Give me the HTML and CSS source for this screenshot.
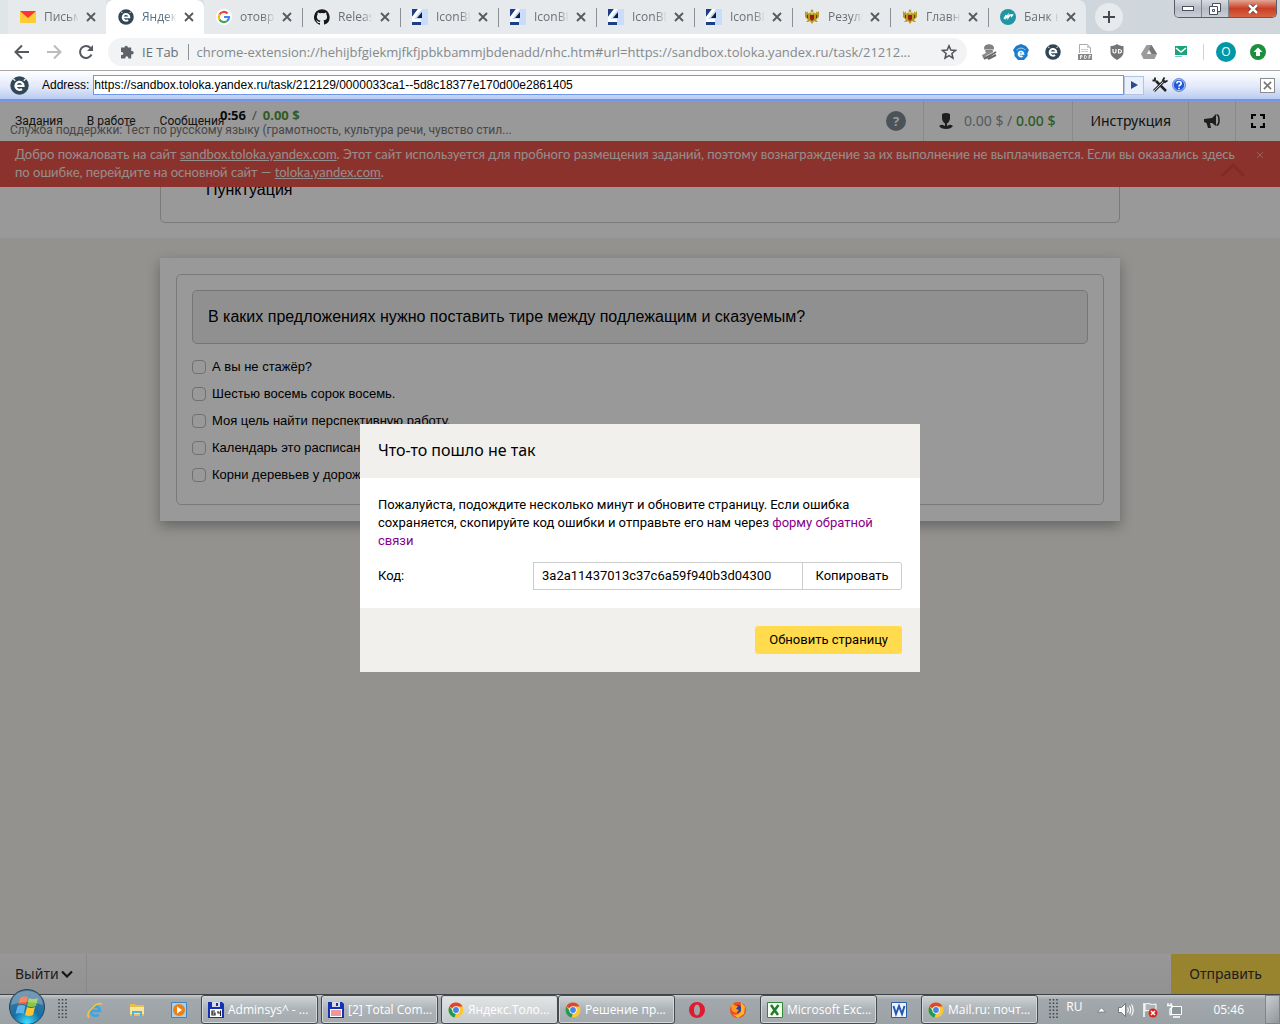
FILE: index.html
```html
<!DOCTYPE html>
<html lang="ru">
<head>
<meta charset="utf-8">
<title>Яндекс.Толока</title>
<link rel="stylesheet" href="styles.css">
</head>
<body>
<svg class="defs" aria-hidden="true">
  <symbol id="i-x" viewBox="0 0 10 10"><path d="M1 1l8 8M9 1l-8 8" stroke="currentColor" stroke-width="1.800" fill="none"/></symbol>
  <symbol id="i-e" viewBox="0 0 20 20"><circle cx="10" cy="10" r="9.700" fill="#2f4757"/><path d="M5.800 10.500h8.400a4.200 4.200 0 1 0-1.600 3.200" stroke="#fff" stroke-width="2.400" fill="none"/><path d="M3.500 3l2 2M16.500 3l-2 2" stroke="#fff" stroke-width="1.200"/></symbol>
  <symbol id="i-bit" viewBox="0 0 16 16"><path fill="#c9dcfb" d="M0 0h16v16H0z"/><path fill="#1d3f86" d="M0 0h6L0 8zM0 13h9v3H0z"/><path fill="#fff" d="M6 0h4L2 10H0V8z"/><path fill="#10203f" d="M10 3v6H5z"/><path fill="#fff" d="M0 10h9v3H0z"/></symbol>
  <symbol id="i-eagle" viewBox="0 0 16 16"><path fill="#b79a1c" d="M8 0l1.500 2L8 4 6.500 2zM1 2l2 2V2l2 3 1-2 2 2 2-2 1 2 2-3v2l2-2v6l-3 3 2 2-2 0-2-1-2 3-2-3-2 1-2 0 2-2-3-3z"/><path fill="#9c1c1c" d="M6 6h4v4l-2 2-2-2z"/><path fill="#4f4208" d="M3 6l1 3M12 6h1v3h-1zM3 6h1v3H3z"/></symbol>
  <symbol id="i-chrome" viewBox="0 0 16 16"><circle cx="8" cy="8" r="7.500" fill="#fbc934"/><path fill="#e04434" d="M8 8L1.300 4.500a7.500 7.500 0 0 1 13.300 0H8z"/><path fill="#229954" d="M1.400 4.500L6 10.500 8 11l-1.500 4.400A7.500 7.500 0 0 1 1.400 4.500z"/><circle cx="8" cy="8" r="3.700" fill="#fff"/><circle cx="8" cy="8" r="2.900" fill="#4684ee"/></symbol>
  <symbol id="i-floppy" viewBox="0 0 16 16"><path fill="#1632b4" d="M0 0h14l2 2v14H0z"/><path fill="#d7dbe4" d="M4 0h8v5H4z"/><path fill="#1632b4" d="M8 1h2v3H8z"/><path fill="#fff" d="M2 7h12v8H2z"/></symbol>
  <symbol id="i-grip" viewBox="0 0 9 21"><path d="M1 0v21M4.500 0v21M8 0v21" stroke="#3d4347" stroke-width="1.500" stroke-dasharray="1.500 2" fill="none"/></symbol>
</svg>

<header class="tabs">
  <nav class="tabs-list" aria-label="Вкладки">
    <a class="tab" href="#"><svg class="icon" viewBox="0 0 16 16"><path fill="#ffcc33" d="M0 2h16v12H0z"/><path fill="#f33" d="M0 2h16L8 9z"/></svg><span class="tab-title">Письма</span><svg class="tab-close"><use href="#i-x"/></svg></a>
    <a class="tab tab-active" href="#"><svg class="icon"><use href="#i-e"/></svg><span class="tab-title">Яндекс</span><svg class="tab-close"><use href="#i-x"/></svg></a>
    <a class="tab" href="#"><svg class="icon" viewBox="0 0 16 16"><circle cx="8" cy="8" r="8" fill="#fff"/><g fill="none" stroke-width="2.200"><path stroke="#ea4335" d="M3.500 5.500a5 5 0 0 1 8-1"/><path stroke="#fbbc05" d="M3.500 5.500a5 5 0 0 0 0 5"/><path stroke="#34a853" d="M3.500 10.500a5 5 0 0 0 7.500 1.500"/><path stroke="#4285f4" d="M8 8h5a5 5 0 0 1-2 4"/></g></svg><span class="tab-title">отовра</span><svg class="tab-close"><use href="#i-x"/></svg></a>
    <a class="tab tab-line" href="#"><svg class="icon" viewBox="0 0 16 16"><path fill="#191717" d="M8 .2a8 8 0 0 0-2.500 15.600c.4 0 .5-.2.500-.4v-1.500c-2.200.5-2.700-1-2.700-1-.4-.9-.9-1.200-.9-1.200-.7-.5.1-.5.100-.5.800.1 1.200.8 1.200.8.700 1.200 1.900.9 2.300.7.100-.5.300-.9.500-1.100-1.800-.2-3.600-.9-3.600-4 0-.9.300-1.600.8-2.100-.1-.2-.4-1 .1-2.100 0 0 .7-.2 2.200.8a7.500 7.500 0 0 1 4 0c1.500-1 2.200-.8 2.200-.8.400 1.100.2 1.900.100 2.100.5.600.8 1.300.8 2.100 0 3.100-1.900 3.700-3.700 3.900.3.300.6.800.6 1.500v2.200c0 .200.100.500.600.400A8 8 0 0 0 8 .2z"/></svg><span class="tab-title">Release</span><svg class="tab-close"><use href="#i-x"/></svg></a>
    <a class="tab tab-line" href="#"><svg class="icon"><use href="#i-bit"/></svg><span class="tab-title">IconBIT</span><svg class="tab-close"><use href="#i-x"/></svg></a>
    <a class="tab tab-line" href="#"><svg class="icon"><use href="#i-bit"/></svg><span class="tab-title">IconBIT</span><svg class="tab-close"><use href="#i-x"/></svg></a>
    <a class="tab tab-line" href="#"><svg class="icon"><use href="#i-bit"/></svg><span class="tab-title">IconBIT</span><svg class="tab-close"><use href="#i-x"/></svg></a>
    <a class="tab tab-line" href="#"><svg class="icon"><use href="#i-bit"/></svg><span class="tab-title">IconBIT</span><svg class="tab-close"><use href="#i-x"/></svg></a>
    <a class="tab tab-line" href="#"><svg class="icon"><use href="#i-eagle"/></svg><span class="tab-title">Резуль</span><svg class="tab-close"><use href="#i-x"/></svg></a>
    <a class="tab tab-line" href="#"><svg class="icon"><use href="#i-eagle"/></svg><span class="tab-title">Главна</span><svg class="tab-close"><use href="#i-x"/></svg></a>
    <a class="tab tab-line" href="#"><svg class="icon" viewBox="0 0 16 16"><circle cx="8" cy="8" r="8" fill="#2196a3"/><path d="M4 10l2-4v3l2-3v3l2-3h2.500l-1.500 2" stroke="#fff" stroke-width="1.300" fill="none"/></svg><span class="tab-title">Банк в</span><svg class="tab-close"><use href="#i-x"/></svg></a>
  </nav>
  <button class="tab-new" aria-label="Новая вкладка"><svg viewBox="0 0 12 12" width="12" height="12"><path d="M6 0v12M0 6h12" stroke="#45494e" stroke-width="2"/></svg></button>
  <div class="win">
    <button class="win-btn" aria-label="Свернуть"><svg viewBox="0 0 12 6" width="12" height="6"><rect x=".5" y=".5" width="11" height="4" fill="#fff" stroke="#4b5061"/></svg></button>
    <button class="win-btn" aria-label="Развернуть"><svg viewBox="0 0 12 12" width="12" height="12"><path d="M3.500.5h8v8h-8z" fill="#fff" stroke="#4b5061"/><path d="M.5 3.500h8v8h-8z" fill="#fff" stroke="#4b5061"/><path d="M3.500 6.500h2v2h-2z" fill="none" stroke="#4b5061"/></svg></button>
    <button class="win-btn win-close" aria-label="Закрыть"><svg viewBox="0 0 12 10" width="12" height="10"><path d="M2 1l8 8M10 1L2 9" stroke="#5b3030" stroke-width="4"/><path d="M2 1l8 8M10 1L2 9" stroke="#fff" stroke-width="2.500"/></svg></button>
  </div>
</header>

<div class="toolbar">
  <button class="tool" aria-label="Назад"><svg viewBox="0 0 16 16" width="16" height="16"><path d="M15 8H2M8 1.500L1.500 8 8 14.500" stroke="#55585d" stroke-width="2" fill="none"/></svg></button>
  <button class="tool" aria-label="Вперёд"><svg viewBox="0 0 16 16" width="16" height="16"><path d="M1 8h13M8 1.500L14.500 8 8 14.500" stroke="#b9bbbe" stroke-width="2" fill="none"/></svg></button>
  <button class="tool" aria-label="Обновить"><svg viewBox="0 0 16 16" width="16" height="16"><path d="M13.500 10.500A6 6 0 1 1 12.500 4" stroke="#55585d" stroke-width="2" fill="none"/><path d="M15 1v6H9z" fill="#55585d"/></svg></button>
  <div class="omnibox">
    <svg viewBox="0 0 14 14" width="14" height="14"><path fill="#5f6368" d="M4.500 2.500a1.700 1.700 0 0 1 3.400 0h3.300V6h.8a1.700 1.700 0 0 1 0 3.400h-.8V13.500H8.300v-.8a1.500 1.500 0 0 0-3 0v.8H1V10h.8a1.500 1.500 0 0 0 0-3.100H1V2.500z"/></svg>
    <span class="omni-name">IE Tab</span>
    <input class="omni-url" aria-label="Адресная строка" value="chrome-extension://hehijbfgiekmjfkfjpbkbammjbdenadd/nhc.htm#url=https://sandbox.toloka.yandex.ru/task/21212...">
    <svg viewBox="0 0 16 16" width="16" height="16"><path d="M8 1.800l1.800 4.300 4.700.4-3.600 3 1.100 4.600L8 11.700l-4 2.400 1.100-4.600-3.600-3 4.700-.4z" fill="none" stroke="#505357" stroke-width="1.500"/></svg>
  </div>
  <div class="ext">
    <svg class="icon" viewBox="0 0 16 16"><ellipse cx="8" cy="4" rx="5" ry="3.800" fill="#808080"/><path d="M3 5.500h10" stroke="#bbb"/><path fill="#8a8a8a" d="M4 7h8v3l-4 5-6-1-1-3 4-2z"/><path d="M3 15L15 8M7 15l8-4" stroke="#666" stroke-width="2"/><path d="M5 12l8-4" stroke="#ccc"/></svg>
    <svg class="icon" viewBox="0 0 16 16"><path fill="#1c78c8" d="M3 2l5-2 5 2 3 4-1.500 3v3L11 16H5l-3.500-4V9L0 6z"/><path d="M3.500 6q4.500-4 9 0" stroke="#9fd0f5" fill="none"/><circle cx="8" cy="10" r="4.800" fill="#1e88dc"/><path d="M5.500 10h5a2.500 2.500 0 1 0-1 2" stroke="#fff" stroke-width="1.600" fill="none"/></svg>
    <svg class="icon"><use href="#i-e"/></svg>
    <svg class="icon" viewBox="0 0 16 16"><path d="M2.500 9V.5h8l3 3V9" fill="#fff" stroke="#aaa"/><path fill="#ccc" d="M10 0v4h4zM4 5h7v1H4zM4 7h7v1H4z"/><path fill="#888" d="M1 10h14v6H1z"/><path d="M3.500 15v-3.500h1.500v1.500H3.500M7.500 11.500v3h1l1-1v-1l-1-1zM12 15v-3.500h2M12 13h1.500" fill="none" stroke="#fff" stroke-width=".8"/></svg>
    <svg class="icon" viewBox="0 0 16 16"><path fill="#747474" d="M8 0c2 1.500 4 2 6.500 2v6c0 4-3.500 6-6.500 8-3-2-6.500-4-6.500-8V2C4 2 6 1.500 8 0z"/><path d="M4 5v2.500q0 1.500 1.500 1.500T7 7.500V5M9.500 5.500v3.500h1q2 0 2-1.700t-2-1.800z" fill="none" stroke="#fff" stroke-width="1.200"/></svg>
    <svg class="icon" viewBox="0 0 16 16"><path fill="#9b9b9b" d="M5.500 1h5L16 10l-2.500 5h-11L0 10z"/><path fill="#777" d="M10.500 1L16 10h-5L8 5z"/><path fill="#f5f5f5" d="M8 6l2.300 4H5.700z"/></svg>
    <svg class="icon" viewBox="0 0 16 16"><path fill="#1ca37c" d="M2 2h12v9H2z"/><path d="M3 4l5 4 5-4" fill="none" stroke="#fff" stroke-width="1.500"/><path fill="#79c9d0" d="M2 12h7v1H2z"/></svg>
  </div>
  <button class="avatar" aria-label="Профиль">О</button>
  <button class="tool" aria-label="Обновление"><svg class="icon" viewBox="0 0 16 16"><circle cx="8" cy="8" r="8" fill="#1e8e3e"/><path fill="#fff" d="M8 3.500L12.500 8H10v4H6V8H3.500z"/></svg></button>
</div>

<form class="iebar">
  <svg class="ie-logo"><use href="#i-e"/></svg>
  <label for="ie-url">Address:</label>
  <input id="ie-url" class="ie-url" value="https://sandbox.toloka.yandex.ru/task/212129/0000033ca1--5d8c18377e170d00e2861405">
  <button type="button" class="ie-go" aria-label="Перейти"><svg viewBox="0 0 7 8" width="7" height="8"><path fill="#2b4a8f" d="M0 0l7 4-7 4z"/></svg></button>
  <button type="button" class="ie-tool" aria-label="Настройки"><svg class="icon" viewBox="0 0 16 16"><path d="M4 4l10 10" stroke="#222" stroke-width="2.500"/><path d="M12 4L2 14" stroke="#333" stroke-width="3"/><path d="M12 4L2 14" stroke="#ccc"/><path d="M3 .5v3h-2.500M15.500 3.500L13 5l-2-2 1.500-2.500" stroke="#222" stroke-width="1.800" fill="none"/></svg></button>
  <button type="button" class="ie-tool" aria-label="Справка"><svg class="icon" viewBox="0 0 16 16"><circle cx="8" cy="8" r="6.500" fill="#1f56d8" stroke="#6d92e8"/><circle cx="8" cy="8" r="5.600" fill="none" stroke="#fff" stroke-width=".6"/><path d="M5.800 6.500c0-3 4.400-2.500 4.400 0 0 1.500-2.200 1.500-2.200 3M8 10.700v1.500" fill="none" stroke="#fff" stroke-width="1.600"/></svg></button>
  <button type="button" class="ie-close" aria-label="Закрыть панель"><svg viewBox="0 0 10 10" width="9" height="9"><use href="#i-x"/></svg></button>
</form>

<main class="page">
  <div class="head">
    <div class="head-left">
      <nav class="menu"><a href="#">Задания</a><a href="#">В работе</a><a href="#">Сообщения</a></nav>
      <div class="task">
        <div class="task-time"><b>0:56</b><span>/</span><b class="green">0.00 $</b></div>
        <div class="task-name">Служба поддержки: Тест по русскому языку (грамотность, культура речи, чувство стил...</div>
      </div>
    </div>
    <div class="head-right">
      <button class="help" aria-label="Помощь">?</button>
      <div class="cell money"><svg viewBox="0 0 14 16" width="14" height="16"><path fill="#333" d="M3 1q4-2 8 0v5q-1 4-4 5-3-1-4-5zM0 13q3-2 4-1 3 2 6 0 1-1 4 1-2 3-7 3t-7-3z"/><path fill="#333" d="M6 9h2v4H6z"/></svg><span>0.00 $ / <b>0.00 $</b></span></div>
      <button class="cell manual">Инструкция</button>
      <button class="cell" aria-label="Сообщить"><svg viewBox="0 0 16 14" width="16" height="14"><path fill="#333" d="M0 5l8-1 4-4v12L8 9H6l1 5H4L2.500 9 0 8z"/><path d="M12.500.8q2.500 0 2.500 5.200t-2.500 5.200" fill="none" stroke="#333" stroke-width="1.600"/></svg></button>
      <button class="cell" aria-label="На весь экран"><svg viewBox="0 0 14 14" width="14" height="14"><path d="M1 5V1h4M9 1h4v4M13 9v4H9M5 13H1V9" fill="none" stroke="#000" stroke-width="2.200"/></svg></button>
    </div>
  </div>
  <div class="alert">
    <p>Добро пожаловать на сайт <a href="#">sandbox.toloka.yandex.com</a>. Этот сайт используется для пробного размещения заданий, поэтому вознаграждение за их выполнение не выплачивается. Если вы оказались здесь по ошибке, перейдите на основной сайт — <a href="#">toloka.yandex.com</a>.</p>
    <button class="alert-close" aria-label="Закрыть"><svg viewBox="0 0 6 6" width="6" height="6"><path d="M0 0l6 6M6 0L0 6" stroke="#f3a8a2" fill="none"/></svg></button>
    <svg class="to-top" viewBox="0 0 24 14" width="24" height="14"><path d="M1 13L12 2l11 11" fill="none" stroke="#db463c" stroke-width="3"/></svg>
  </div>
  <section class="intro"><div class="intro-card">Пунктуация</div></section>
  <section class="sheet">
    <fieldset class="quiz">
      <legend class="question">В каких предложениях нужно поставить тире между подлежащим и сказуемым?</legend>
      <label><input type="checkbox">А вы не стажёр?</label>
      <label><input type="checkbox">Шестью восемь сорок восемь.</label>
      <label><input type="checkbox">Моя цель найти перспективную работу.</label>
      <label><input type="checkbox">Календарь это расписание.</label>
      <label><input type="checkbox">Корни деревьев у дорожки.</label>
    </fieldset>
  </section>
  <footer class="foot">
    <button class="exit">Выйти <svg viewBox="0 0 12 8" width="12" height="8"><path d="M1 1.500l5 5 5-5" fill="none" stroke="#222" stroke-width="2.200"/></svg></button>
    <button class="submit">Отправить</button>
  </footer>
  <div class="overlay">
    <div class="modal" role="dialog" aria-labelledby="modal-title">
      <h2 id="modal-title">Что-то пошло не так</h2>
      <div class="modal-body">
        <p>Пожалуйста, подождите несколько минут и обновите страницу. Если ошибка сохраняется, скопируйте код ошибки и отправьте его нам через <a href="#">форму обратной связи</a></p>
        <div class="code">
          <label for="code">Код:</label>
          <input id="code" value="3a2a11437013c37c6a59f940b3d04300">
          <button>Копировать</button>
        </div>
      </div>
      <div class="modal-foot"><button>Обновить страницу</button></div>
    </div>
  </div>
</main>

<div class="taskbar">
  <button class="start" aria-label="Пуск"><svg viewBox="0 0 38 38" width="38" height="38"><defs><radialGradient id="orb" cx=".5" cy=".95" r=".9"><stop offset="0" stop-color="#3ee0ff"/><stop offset=".45" stop-color="#1570a8"/><stop offset="1" stop-color="#4d7896"/></radialGradient></defs><circle cx="19" cy="19" r="17.500" fill="url(#orb)" stroke="#23435a"/><path fill="#f0602c" d="M12 10q3-3 8-1l-2 8q-4-2-8 0z"/><path fill="#8cc63f" d="M21 10q4 2 9 0l-2 8q-5 2-9 0z"/><path fill="#5fb4ea" d="M9.500 18q4-2 8 0l-2 8q-4-2-8 0z"/><path fill="#fdc530" d="M19 19q4 2 8 0l-2 8q-4 2-8 0z"/><path fill="#fff" opacity=".25" d="M3 17Q5 3 19 3t16 14q-16-6-32 0z"/></svg></button>
  <svg class="grip"><use href="#i-grip"/></svg>
  <button class="quick" aria-label="Internet Explorer"><svg class="icon" viewBox="0 0 16 16"><path d="M3.500 9h9.500a4.700 4.700 0 1 0-1.500 3.500" fill="none" stroke="#3aa5e8" stroke-width="2.600"/><path d="M2 15.500c-4-4 7-16 13-13.500" fill="none" stroke="#f5c33a" stroke-width="1.700"/></svg></button>
  <button class="quick" aria-label="Проводник"><svg class="icon" viewBox="0 0 16 16"><path fill="#e9bd4d" d="M1 2h5l1 1h8v11H1z"/><path fill="#fbe79c" d="M1 5h14v7H1z"/><path d="M4 15v-5h8v5" fill="none" stroke="#5ab0dd" stroke-width="2"/></svg></button>
  <button class="quick" aria-label="Проигрыватель"><svg class="icon" viewBox="0 0 16 16"><path fill="#a7d0ee" stroke="#3f86bd" d="M.5.5h15v15H.5z"/><circle cx="8" cy="8" r="6" fill="#f07f13"/><path fill="#fff" d="M6 4.500l5 3.500-5 3.500z"/></svg></button>
  <div class="apps">
    <button class="app"><svg class="icon" viewBox="0 0 16 16"><use href="#i-floppy"/><path d="M7 9H4v4h3v-2H4M10 9v2h3M12.500 8.500V14" fill="none" stroke="#222" stroke-width="1.200"/></svg><span>Adminsys^ - ...</span></button>
    <button class="app"><svg class="icon" viewBox="0 0 16 16"><use href="#i-floppy"/><path d="M3 9h10M3 11h10M3 13h10" stroke="#d6303c"/></svg><span>[2] Total Com...</span></button>
    <div class="pair">
      <button class="app app-on"><svg class="icon"><use href="#i-chrome"/></svg><span>Яндекс.Толо...</span></button>
      <button class="app"><svg class="icon"><use href="#i-chrome"/></svg><span>Решение пр...</span></button>
    </div>
    <button class="quick" aria-label="Opera"><svg class="icon" viewBox="0 0 16 16"><path fill="#e01b2f" fill-rule="evenodd" d="M8 0a8 8 0 1 0 0 16A8 8 0 0 0 8 0zm0 2.500c2 0 3 2.500 3 5.500s-1 5.500-3 5.500S5 11 5 8s1-5.500 3-5.500z"/></svg></button>
    <button class="quick" aria-label="Firefox"><svg class="icon" viewBox="0 0 16 16"><circle cx="8" cy="8" r="8" fill="#ef4a24"/><path fill="#ffb52b" d="M11 0l4 5-1 7-6 4-6-4c4 2 9 0 9-4z"/><path fill="#31449b" d="M5 3h4l2 2v4l-3 2-3-2 2-1-3-2z"/><path fill="#ff9a1f" d="M1 4l1-3 2 2 4 1-2 3 3 1-3 3-4-2z"/></svg></button>
    <button class="app"><svg class="icon" viewBox="0 0 16 16"><path fill="#f4fff0" stroke="#2d8a35" d="M.5.500h15v15H.5z"/><path d="M4 3l7 10M11.500 3L4 13" stroke="#257a2d" stroke-width="2.500"/></svg><span>Microsoft Exc...</span></button>
    <button class="quick" aria-label="Word"><svg class="icon" viewBox="0 0 16 16"><path fill="#eef4ff" stroke="#2a5dad" d="M.5.500h15v15H.5z"/><path d="M2.500 4l2.500 8 3-8 3 8 2.500-8" fill="none" stroke="#2357b0" stroke-width="2"/></svg></button>
    <button class="app"><svg class="icon"><use href="#i-chrome"/></svg><span>Mail.ru: почт...</span></button>
  </div>
  <div class="tray">
    <svg class="grip"><use href="#i-grip"/></svg>
    <span class="lang">RU</span>
    <svg class="arrow" viewBox="0 0 9 6" width="9" height="6"><path d="M.5 5L4.500.8 8.500 5z" fill="#fff" stroke="#555a60" stroke-width=".6"/></svg>
    <svg class="icon" viewBox="0 0 16 16"><path fill="#fff" stroke="#50555a" stroke-width=".7" d="M.5 5.500h3l4-4v13l-4-4h-3z"/><path d="M9.500 5.500q1.500 2.500 0 5M11.500 4q2.500 4 0 8M13.500 2.500q3.500 5.500 0 11" fill="none" stroke="#fff" stroke-width="1.100"/></svg>
    <svg class="icon" viewBox="0 0 16 16"><path d="M2 1v14" stroke="#fff" stroke-width="1.500"/><path fill="#aeb3b8" stroke="#fff" d="M3 2q3-1 5 0t6 0v7q-3 1-6 0T3 9z"/><circle cx="11" cy="11" r="4.500" fill="#d8251d"/><path d="M9 9l4 4M13 9l-4 4" stroke="#fff" stroke-width="1.500"/></svg>
    <svg class="icon" viewBox="0 0 16 16"><path fill="#8d959b" stroke="#fff" d="M5.500 4.500h10v8h-10z"/><path d="M7 15h7M2 1v3M5 1v3M1 3.500h5v2L4 7v5.500h2" stroke="#fff" stroke-width="1.300" fill="none"/></svg>
    <time class="clock">05:46</time>
    <button class="desk" aria-label="Свернуть все окна"></button>
  </div>
</div>
</body>
</html>
```
FILE: styles.css
```css
* { box-sizing: border-box; }
body {
  margin: 0;
  min-height: 100vh;
  display: flex;
  flex-direction: column;
  font: 12px/16px "Open Sans", "Noto Sans", sans-serif;
  color: #000;
  background: #fff;
}
button { border: 0; padding: 0; background: none; font: inherit; color: inherit; }
input { font: inherit; color: inherit; }
svg { flex: none; display: block; }
p, h2 { margin: 0; }
.defs { position: absolute; width: 0; height: 0; }
.icon { width: 16px; height: 16px; }

/* browser tabs */
.tabs {
  display: flex;
  height: 34px;
  padding-left: 8px;
  background: linear-gradient(90deg, #e0e5e8, #cfd4dc 60%, #d0d7dc);
}
.tabs-list { display: flex; min-width: 0; }
.tab {
  width: 98px;
  height: 34px;
  padding: 0 10px 0 12px;
  display: flex;
  align-items: center;
  gap: 8px;
  color: #6a7075;
  text-decoration: none;
  background: #e7eaed;
}
.tab:last-child { border-radius: 0 8px 0 0; }
.tab-active { background: #fff; border-radius: 8px 8px 0 0; color: #5b7284; }
.tab-line { background: linear-gradient(#8b9096, #8b9096) 0 8px / 1px 19px no-repeat #e7eaed; }
.tab-title {
  width: 34px;
  overflow: hidden;
  white-space: nowrap;
  -webkit-mask-image: linear-gradient(90deg, #000 70%, rgba(0, 0, 0, .1));
  mask-image: linear-gradient(90deg, #000 70%, rgba(0, 0, 0, .1));
}
.tab-close { width: 10px; height: 10px; color: #55595e; }
.tab-new {
  width: 28px;
  height: 28px;
  margin: 3px 0 0 9px;
  display: grid;
  place-items: center;
  border-radius: 50%;
  background: #e6eaec;
}
.win {
  display: flex;
  height: 18px;
  margin: 0 3px 0 auto;
  border: 1px solid #555d68;
  border-top: 0;
  border-radius: 0 0 5px 5px;
  overflow: hidden;
}
.win-btn {
  width: 27px;
  display: grid;
  place-items: center;
  border-right: 1px solid #7d848d;
  background: linear-gradient(#d8dce2, #b6bcc6 50%, #c9ced6);
}
.win-close { width: 47px; border: 0; background: linear-gradient(#e3a594, #cb3f25 50%, #d66443); }

/* address row */
.toolbar {
  display: flex;
  align-items: center;
  height: 36px;
  padding: 0 14px;
  gap: 16px;
}
.omnibox {
  flex: 1;
  min-width: 0;
  height: 28px;
  margin: 0 -2px;
  padding: 0 10px 0 12px;
  display: flex;
  align-items: center;
  gap: 8px;
  border-radius: 14px;
  background: #f1f3f4;
  font-size: 13px;
  color: #6a6e73;
}
.omni-name { padding-right: 9px; border-right: 1px solid #8e9195; }
.omni-url {
  flex: 1;
  min-width: 0;
  border: 0;
  padding: 0;
  background: none;
  color: #85898d;
}
.ext {
  display: flex;
  gap: 16px;
  padding-right: 14px;
  border-right: 1px solid #cfd1d4;
}
.avatar {
  width: 20px;
  height: 20px;
  margin-right: -2px;
  margin-left: -4px;
  border-radius: 50%;
  background: #0097a7;
  color: #fff;
}

/* extension address bar */
.iebar {
  display: flex;
  align-items: center;
  height: 31px;
  padding: 0 5px 0 10px;
  border-top: 1px solid #a9a9a9;
  border-bottom: 2px solid #6f96e8;
  background: linear-gradient(#fff, #dfe7f8 60%, #b9cbf0);
  font: 12px/16px "Liberation Sans", Arial, sans-serif;
}
.ie-logo { width: 19px; height: 19px; margin-right: 13px; }
.ie-url {
  flex: 1;
  min-width: 0;
  height: 20px;
  margin-left: 4px;
  padding: 0;
  border: 1px solid #6f96e8;
  background: #fff;
}
.ie-go {
  width: 20px;
  height: 19px;
  margin-right: 8px;
  display: grid;
  place-items: center;
  border: 1px solid #b4c3e2;
  background: #e9effb;
}
.ie-tool { margin-right: 3px; }
.ie-close {
  width: 15px;
  height: 15px;
  margin-left: 70px;
  display: grid;
  place-items: center;
  border: 1px solid #8c8c8c;
  background: #fff;
  color: #777;
}

/* site */
.page {
  flex: 1;
  position: relative;
  display: flex;
  flex-direction: column;
  background: #f5f3ef;
  font: 13px/18px Roboto, "Noto Sans", sans-serif;
}
.head {
  display: flex;
  justify-content: space-between;
  height: 40px;
  background: #fff;
}
.head-left { display: grid; }
.head-left > * { grid-area: 1 / 1; }
.menu {
  display: flex;
  gap: 24px;
  align-items: center;
  padding-left: 15px;
  font-size: 12px;
}
.menu a { color: #222; text-decoration: none; }
.task { padding: 5px 0 0 10px; font-size: 12px; line-height: 13px; color: #777; }
.task-time {
  display: flex;
  gap: 6px;
  padding-left: 210px;
  font: 13px/18px "Noto Sans", sans-serif;
}
.task b { color: #111; }
.task .green { color: #4f9a3a; }
.head-right { display: flex; align-items: center; font-family: "Noto Sans", sans-serif; }
.help {
  width: 20px;
  height: 20px;
  margin-right: 17px;
  border-radius: 50%;
  background: #7e8a94;
  color: #fff;
  font-weight: 700;
}
.cell {
  height: 40px;
  padding: 0 15px;
  display: flex;
  align-items: center;
  border-left: 1px solid #e6e6e6;
  color: #222;
}
.manual { padding: 0 17px; font-size: 14px; }
.money { gap: 11px; padding-right: 17px; color: #8f979d; font-size: 14px; }
.money b { font-weight: 500; color: #4f9a3a; }
.alert {
  position: absolute;
  top: 40px;
  left: 0;
  right: 0;
  display: flex;
  gap: 10px;
  padding: 4px 17px 6px 15px;
  background: rgba(232, 78, 68, .97);
  color: #f8ebe9;
  font-family: Lato, Roboto, sans-serif;
}
.alert p { flex: 1; }
.alert a { color: inherit; }
.alert-close { align-self: flex-start; padding-top: 7px; }
.to-top { position: absolute; right: 35px; top: 22px; }
.intro { height: 97px; padding: 0 16px; background: #fff; }
.intro-card {
  max-width: 960px;
  height: 82px;
  margin: 0 auto;
  padding: 40px 45px 0;
  border: 1px solid #ccc;
  border-top: 0;
  border-radius: 0 0 5px 5px;
  font: 16px/18px "Liberation Sans", Arial, sans-serif;
}
.sheet {
  width: 100%;
  max-width: 960px;
  margin: 20px auto;
  padding: 16px;
  background: #fff;
  box-shadow: 0 5px 12px rgba(0, 0, 0, .3);
}
.quiz {
  margin: 0;
  padding: 15px 15px 16px;
  border: 1px solid #ccc;
  border-radius: 5px;
  display: flex;
  flex-direction: column;
  font: 13px/27px "Liberation Sans", Arial, sans-serif;
}
.question {
  float: left;
  width: 100%;
  margin-bottom: 9px;
  padding: 0 15px;
  border: 1px solid #c4c4c4;
  border-radius: 5px;
  background: #f0f0f0;
  font-size: 16px;
  line-height: 52px;
}
.quiz label { display: flex; align-items: center; gap: 6px; }
.quiz input {
  appearance: none;
  width: 14px;
  height: 14px;
  margin: 0;
  border: 1px solid #bbb;
  border-radius: 4px;
  background: #fff;
}
.foot {
  height: 41px;
  margin-top: auto;
  display: flex;
  justify-content: space-between;
  border-top: 1px solid #f5f5f5;
  background: linear-gradient(#fdfdfd, #f3f3f3);
  font: 14px/18px "Noto Sans", sans-serif;
  color: #333;
}
.exit {
  display: flex;
  align-items: center;
  gap: 2px;
  padding: 0 13px 0 15px;
  border-right: 1px solid #e4e4e4;
}
.submit { padding: 0 18px; background: #fedb4d; }
.overlay {
  position: absolute;
  inset: 0;
  display: grid;
  place-items: center;
  background: rgba(0, 0, 0, .4);
}
.modal { width: 560px; max-width: 100%; background: #fff; }
.modal h2, .modal-foot { padding: 18px; background: #f2f0ed; }
.modal h2 { padding: 17px 18px 19px; font: 400 16px/18px "Noto Sans", sans-serif; }
.modal-body { padding: 18px; }
.modal a { color: #808; text-decoration: none; }
.code { display: flex; align-items: center; margin-top: 12px; }
.code label { width: 155px; }
.code input {
  flex: 1;
  min-width: 0;
  height: 28px;
  padding: 0 8px;
  border: 1px solid #ccc;
}
.code button {
  width: 100px;
  height: 28px;
  margin-left: -1px;
  border: 1px solid #ccc;
  border-radius: 0 3px 3px 0;
}
.modal-foot { display: flex; justify-content: flex-end; }
.modal-foot button { height: 28px; padding: 0 14px; border-radius: 3px; background: #ffdb4d; }

/* taskbar */
.taskbar {
  position: relative;
  display: flex;
  align-items: center;
  height: 30px;
  padding-left: 58px;
  border-top: 1px solid #3f4346;
  background: linear-gradient(#c4c9cc, #a2a8ac 15%, #9ba2a6);
  color: #fff;
}
.start { position: absolute; left: 8px; top: -7px; height: 36px; overflow: hidden; }
.grip { width: 9px; height: 21px; }
.quick { width: 42px; display: grid; place-items: center; }
.grip + .quick { margin-left: 7px; }
.apps { flex: 1; display: flex; align-items: center; gap: 3px; padding-left: 1px; }
.apps .quick { width: 38px; }
.pair { display: flex; }
.app {
  width: 117px;
  height: 29px;
  padding: 0 6px;
  display: flex;
  align-items: center;
  gap: 4px;
  border: 1px solid #454a4e;
  border-radius: 3px;
  background: linear-gradient(#cfd3d6, #adb2b6 50%, #a4aaae);
  box-shadow: inset 0 0 0 1px #d3d7d9;
  white-space: nowrap;
}
.app-on { background: linear-gradient(#e2e5e6, #c6cacc); }
.tray { display: flex; align-items: center; gap: 8px; }
.lang { line-height: 20px; padding-bottom: 6px; }
.arrow { margin: 0 4px 0 7px; }
.clock { margin: 0 13px 0 23px; }
.desk { width: 15px; height: 29px; border: 1px solid #7e8488; background: linear-gradient(135deg, #c9cdd0, #8f969a); }
```
